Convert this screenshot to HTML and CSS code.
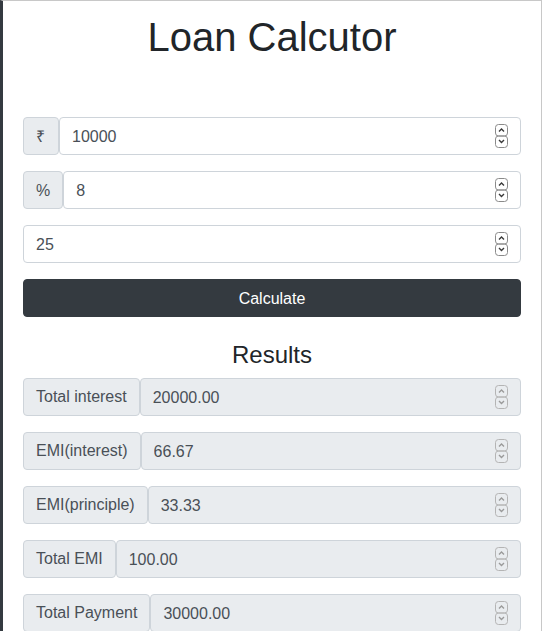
FILE: index.html
```html
<!DOCTYPE html>
<html>
<head>
<meta charset="utf-8">
<link rel="stylesheet" href="styles.css">
</head>
<body>
<div class="app">
  <h1 class="title">Loan Calcutor</h1>
  <form class="form">
    <div class="group">
      <span class="addon addon-symbol">₹</span>
      <div class="field">
        <input class="control" type="text" value="10000">
        <svg class="spin" viewBox="0 0 13 24" width="13" height="24"><rect x="0.5" y="0.5" width="12" height="11.5" rx="3"/><rect x="0.5" y="12" width="12" height="11.5" rx="3"/><path d="M4 7.5 L6.5 5 L9 7.5"/><path d="M4 16 L6.5 18.5 L9 16"/></svg>
      </div>
    </div>
    <div class="group">
      <span class="addon">%</span>
      <div class="field">
        <input class="control" type="text" value="8">
        <svg class="spin" viewBox="0 0 13 24" width="13" height="24"><rect x="0.5" y="0.5" width="12" height="11.5" rx="3"/><rect x="0.5" y="12" width="12" height="11.5" rx="3"/><path d="M4 7.5 L6.5 5 L9 7.5"/><path d="M4 16 L6.5 18.5 L9 16"/></svg>
      </div>
    </div>
    <div class="group">
      <div class="field">
        <input class="control" type="text" value="25">
        <svg class="spin" viewBox="0 0 13 24" width="13" height="24"><rect x="0.5" y="0.5" width="12" height="11.5" rx="3"/><rect x="0.5" y="12" width="12" height="11.5" rx="3"/><path d="M4 7.5 L6.5 5 L9 7.5"/><path d="M4 16 L6.5 18.5 L9 16"/></svg>
      </div>
    </div>
    <button class="btn" type="button">Calculate</button>
  </form>
  <h4 class="subtitle">Results</h4>
  <div class="results">
    <div class="group">
      <span class="addon">Total interest</span>
      <div class="field">
        <input class="control readonly" type="text" value="20000.00" readonly>
        <svg class="spin dim" viewBox="0 0 13 24" width="13" height="24"><rect x="0.5" y="0.5" width="12" height="11.5" rx="3"/><rect x="0.5" y="12" width="12" height="11.5" rx="3"/><path d="M4 7.5 L6.5 5 L9 7.5"/><path d="M4 16 L6.5 18.5 L9 16"/></svg>
      </div>
    </div>
    <div class="group">
      <span class="addon">EMI(interest)</span>
      <div class="field">
        <input class="control readonly" type="text" value="66.67" readonly>
        <svg class="spin dim" viewBox="0 0 13 24" width="13" height="24"><rect x="0.5" y="0.5" width="12" height="11.5" rx="3"/><rect x="0.5" y="12" width="12" height="11.5" rx="3"/><path d="M4 7.5 L6.5 5 L9 7.5"/><path d="M4 16 L6.5 18.5 L9 16"/></svg>
      </div>
    </div>
    <div class="group">
      <span class="addon">EMI(principle)</span>
      <div class="field">
        <input class="control readonly" type="text" value="33.33" readonly>
        <svg class="spin dim" viewBox="0 0 13 24" width="13" height="24"><rect x="0.5" y="0.5" width="12" height="11.5" rx="3"/><rect x="0.5" y="12" width="12" height="11.5" rx="3"/><path d="M4 7.5 L6.5 5 L9 7.5"/><path d="M4 16 L6.5 18.5 L9 16"/></svg>
      </div>
    </div>
    <div class="group">
      <span class="addon">Total EMI</span>
      <div class="field">
        <input class="control readonly" type="text" value="100.00" readonly>
        <svg class="spin dim" viewBox="0 0 13 24" width="13" height="24"><rect x="0.5" y="0.5" width="12" height="11.5" rx="3"/><rect x="0.5" y="12" width="12" height="11.5" rx="3"/><path d="M4 7.5 L6.5 5 L9 7.5"/><path d="M4 16 L6.5 18.5 L9 16"/></svg>
      </div>
    </div>
    <div class="group">
      <span class="addon">Total Payment</span>
      <div class="field">
        <input class="control readonly" type="text" value="30000.00" readonly>
        <svg class="spin dim" viewBox="0 0 13 24" width="13" height="24"><rect x="0.5" y="0.5" width="12" height="11.5" rx="3"/><rect x="0.5" y="12" width="12" height="11.5" rx="3"/><path d="M4 7.5 L6.5 5 L9 7.5"/><path d="M4 16 L6.5 18.5 L9 16"/></svg>
      </div>
    </div>
  </div>
</div>
</body>
</html>
```

FILE: styles.css
```css
* { box-sizing: border-box; }
html, body { margin: 0; padding: 0; background: #fff; }
body {
  font-family: "Liberation Sans", Arial, sans-serif;
  font-size: 16px;
  line-height: 1.5;
  color: #212529;
}
.app {
  border-top: 1px solid #c8c8c8;
  border-right: 1px solid #c8c8c8;
  border-left: 3px solid #343a40;
  padding: 12px 20px 40px 20px;
  min-height: 700px;
}
.title {
  margin: 0 0 56px 0;
  font-size: 40px;
  font-weight: 500;
  line-height: 1.2;
  text-align: center;
  color: #212529;
}
.form { margin: 0; }
.group {
  display: flex;
  align-items: stretch;
  height: 38px;
  margin-bottom: 16px;
}
.addon {
  display: flex;
  align-items: center;
  padding: 1px 12px 0 12px;
  background: #e9ecef;
  border: 1px solid #ced4da;
  border-radius: 4px;
  color: #495057;
  font-size: 16px;
  white-space: nowrap;
}
.addon-symbol { padding-right: 13px; }
.field {
  position: relative;
  flex: 1;
  display: flex;
}
.control {
  width: 100%;
  height: 38px;
  padding: 7px 12px 5px 12px;
  border: 1px solid #ced4da;
  border-radius: 4px;
  font-family: "Liberation Sans", Arial, sans-serif;
  font-size: 16px;
  color: #495057;
  background: #fff;
  outline: none;
}
.control.readonly { background: #e9ecef; }
.spin {
  position: absolute;
  right: 13px;
  top: 7px;
  fill: none;
  stroke: #8a8a8a;
  stroke-width: 1;
}
.spin path { stroke: #3a3a3a; stroke-width: 1.4; }
.spin.dim rect { stroke: #b4b4b4; }
.spin.dim path { stroke: #9a9a9a; }
.btn {
  display: block;
  width: 100%;
  height: 38px;
  margin: 0 0 24px 0;
  border: 1px solid #343a40;
  border-radius: 4px;
  background: #343a40;
  color: #fff;
  font-family: "Liberation Sans", Arial, sans-serif;
  font-size: 16px;
  line-height: 1.5;
  padding: 7px 12px 5px 12px;
}
.subtitle {
  margin: 0 0 8px 0;
  font-size: 24px;
  font-weight: 500;
  line-height: 1.2;
  text-align: center;
  color: #212529;
}
```
